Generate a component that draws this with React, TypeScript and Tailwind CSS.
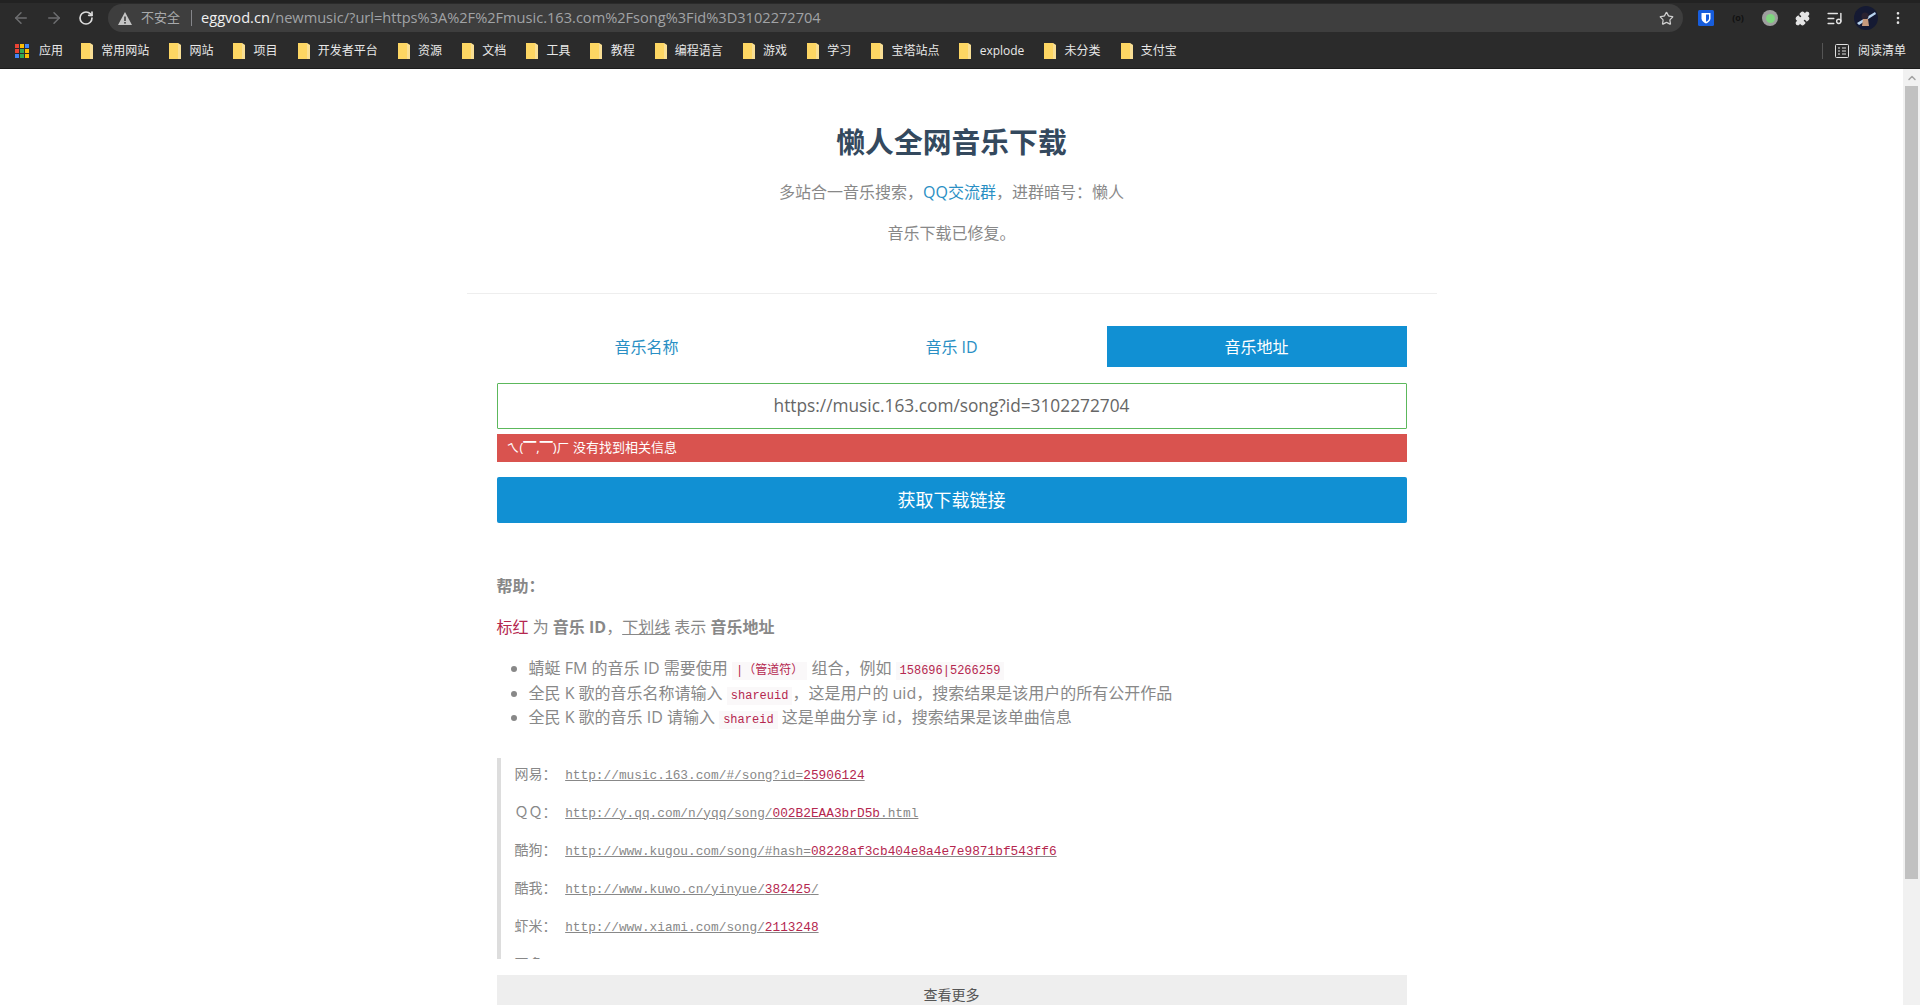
import { ArrowLeft, ArrowRight, RotateCw, Star, Puzzle, ChevronUp, EllipsisVertical, ListMusic } from 'lucide-react';

const bookmarks = ['常用网站', '网站', '项目', '开发者平台', '资源', '文档', '工具', '教程', '编程语言', '游戏', '学习', '宝塔站点', 'explode', '未分类', '支付宝'];

const examples = [
  { label: '网易', plain: 'http://music.163.com/#/song?id=', red: '25906124', tail: '' },
  { label: 'ＱＱ', plain: 'http://y.qq.com/n/yqq/song/', red: '002B2EAA3brD5b', tail: '.html' },
  { label: '酷狗', plain: 'http://www.kugou.com/song/#hash=', red: '08228af3cb404e8a4e7e9871bf543ff6', tail: '' },
  { label: '酷我', plain: 'http://www.kuwo.cn/yinyue/', red: '382425', tail: '/' },
  { label: '虾米', plain: 'http://www.xiami.com/song/', red: '2113248', tail: '' },
  { label: '更多', plain: 'http://www.xiami.com/', red: '', tail: '' },
];

function Folder() {
  return (
    <svg width="12" height="16" viewBox="0 0 12 16" className="shrink-0">
      <path d="M0 0h9l3 2v14H0z" fill="#fdd663" />
      <path d="M9 0l3 2v14H9z" fill="#f2f2f2" opacity="0.35" />
    </svg>
  );
}

function AppsIcon() {
  const colors = ['#ea4335', '#fbbc04', '#4285f4', '#ea4335', '#34a853', '#fbbc04', '#4285f4', '#34a853', '#fbbc04'];
  return (
    <svg width="14" height="14" viewBox="0 0 14 14" className="shrink-0">
      {colors.map((c, i) => (
        <rect key={i} x={(i % 3) * 5} y={Math.floor(i / 3) * 5} width="4" height="4" fill={c} />
      ))}
    </svg>
  );
}

function Code({ children }: { children: React.ReactNode }) {
  return (
    <code className="bg-[#faf8f9] text-[#b5274f] text-[12px] leading-none px-[4px] py-[2px] font-['Liberation_Mono','Noto_Sans_CJK_SC',monospace]">
      {children}
    </code>
  );
}

function Toolbar() {
  return (
    <div className="h-[36px] bg-[#2b2b2b] flex items-center pb-[3px] pl-[5px] border-t-[3px] border-[#222222]">
      <div className="w-[32px] flex justify-center"><ArrowLeft size={18} className="text-[#6d6e70]" /></div>
      <div className="w-[33px] flex justify-center"><ArrowRight size={18} className="text-[#6d6e70]" /></div>
      <div className="w-[32px] flex justify-center"><RotateCw size={16} strokeWidth={2.5} className="text-[#dcdcdc]" /></div>
      <div className="ml-[6px] w-[1575px] h-[28px] rounded-full bg-[#3e3e3e] flex items-center pl-[10px] pr-[9px] text-[14.600px]">
        <svg width="14" height="13" viewBox="0 0 14 13" className="shrink-0">
          <path d="M7 0l7 13H0z" fill="#c4c4c4" />
          <rect x="6.2" y="4.5" width="1.6" height="4.5" fill="#3e3e3e" />
          <rect x="6.2" y="10" width="1.6" height="1.6" fill="#3e3e3e" />
        </svg>
        <span className="ml-[9px] text-[13px] text-[#a8a9ab]">不安全</span>
        <span className="ml-[11px] mr-[9px] w-[1px] h-[16px] bg-[#85868a]" />
        <span className="text-[#f1f1f1]">eggvod.cn</span>
        <span className="text-[#a1a3a6]">/newmusic/?url=https%3A%2F%2Fmusic.163.com%2Fsong%3Fid%3D3102272704</span>
        <Star size={15} className="ml-auto text-[#d0d0d0]" />
      </div>
      <div className="ml-[7px] flex items-center">
        <div className="w-[32px] flex justify-center">
          <svg width="16" height="16" viewBox="0 0 16 16">
            <rect width="16" height="16" rx="1.5" fill="#175ddc" />
            <path d="M3.5 3h9v5.5c0 2.5-2.5 4-4.5 5-2-1-4.500-2.500-4.500-5z" fill="#fff" />
            <path d="M8 4.500h3v4c0 1.500-1.500 2.500-3 3.300z" fill="#175ddc" />
          </svg>
        </div>
        <div className="w-[32px] text-center text-[9px] font-bold text-[#111111]">(o)</div>
        <div className="w-[32px] flex justify-center">
          <div className="w-[16px] h-[16px] rounded-full bg-[#9e9e9e] flex items-center justify-center">
            <div className="w-[9px] h-[9px] rounded-full bg-[#7fd67f]" />
          </div>
        </div>
        <div className="w-[32px] flex justify-center"><Puzzle size={15} fill="#e4e4e4" className="text-[#e4e4e4]" /></div>
        <div className="w-[32px] flex justify-center"><ListMusic size={17} className="text-[#e4e4e4]" /></div>
        <div className="w-[32px] flex justify-center">
          <svg width="24" height="24" viewBox="0 0 24 24">
            <circle cx="12" cy="12" r="12" fill="#151a33" />
            <path d="M3 17L21 6l1 2L5 19z" fill="#b8d4ef" />
            <circle cx="11" cy="10" r="3.500" fill="#2a2230" />
            <path d="M9 13h5l1 7H8z" fill="#c69a7d" />
          </svg>
        </div>
        <div className="w-[32px] flex justify-center"><EllipsisVertical size={16} className="text-[#e4e4e4]" /></div>
      </div>
    </div>
  );
}

function BookmarkBar() {
  return (
    <div className="h-[33px] bg-[#2b2b2b] flex items-center pb-[2px] pl-[15px] pr-[14px] text-[12px] text-[#e8e8e8] border-b border-[#1c1c1c]">
      <div className="flex items-center gap-[10px] mr-[18px]">
        <AppsIcon />
        <span>应用</span>
      </div>
      <div className="flex items-center gap-[20px]">
        {bookmarks.map((name) => (
          <div key={name} className="flex items-center gap-[8.200px]">
            <Folder />
            <span>{name}</span>
          </div>
        ))}
      </div>
      <div className="ml-auto flex items-center">
        <span className="w-[1px] h-[16px] bg-[#555555] mr-[12px]" />
        <svg width="14" height="14" viewBox="0 0 14 14" fill="none" stroke="#e0e0e0" className="mr-[9px]">
          <rect x="0.500" y="0.500" width="13" height="13" rx="1" />
          <path d="M3 4h2M7 4h4M3 7h2M7 7h4M3 10h2M7 10h4" />
        </svg>
        <span>阅读清单</span>
      </div>
    </div>
  );
}

function Scrollbar() {
  return (
    <div className="w-[17px] shrink-0 bg-[#f1f1f1] flex flex-col items-center">
      <div className="h-[17px] flex items-center justify-center">
        <ChevronUp size={12} strokeWidth={3} className="text-[#a3a3a3]" />
      </div>
      <div className="w-[13px] h-[793px] bg-[#c1c1c1]" />
    </div>
  );
}

export default function App() {
  return (
    <div className="h-screen overflow-hidden flex flex-col bg-white font-['Open_Sans','Noto_Sans_CJK_SC',sans-serif]">
      <Toolbar />
      <BookmarkBar />
      <div className="flex-1 flex min-h-0">
        <div className="flex-1 overflow-hidden relative">
          <div className="w-[970px] mx-auto">
            <header className="h-[225px] border-b border-[#eeeeee] flex flex-col items-center text-[16px] text-[#888888]">
              <h1 className="mt-[53px] text-[28.800px] leading-[40px] font-bold text-[#34495e]">懒人全网音乐下载</h1>
              <p className="mt-[17px] leading-[26px]">
                多站合一音乐搜索，<span className="text-[#2a8fc4]">QQ交流群</span>，进群暗号：懒人
              </p>
              <p className="mt-[15px] leading-[26px]">音乐下载已修复。</p>
            </header>

            <div className="w-[910px] mx-auto mt-[32px]">
              <div className="grid grid-cols-3 gap-[5px] text-[16px] text-center leading-[40px] text-[#2a8fc4]">
                <div className="pt-[1px]">音乐名称</div>
                <div className="pt-[1px]">音乐 ID</div>
                <div className="pt-[1px] bg-[#1190d3] text-white">音乐地址</div>
              </div>
              <div className="mt-[16px] h-[46px] border border-[#5cb85c] rounded-[1px] flex items-center justify-center text-[17.300px] text-[#666666]">
                https://music.163.com/song?id=3102272704
              </div>
              <div className="mt-[5px] h-[28px] bg-[#d9534f] flex items-center pb-[1px] pl-[10px] text-[13px] text-white">
                ㄟ(▔,▔)ㄏ 没有找到相关信息
              </div>
              <button className="mt-[15px] w-full h-[46px] rounded-[2px] bg-[#1190d3] text-white text-[18px] block">
                获取下载链接
              </button>

              <div className="mt-[50px] text-[16px] text-[#888888] leading-[26px]">
                <p className="font-bold">帮助：</p>
                <p className="mt-[15px]">
                  <span className="text-[#b5274f]">标红</span> 为 <b>音乐 ID</b>，<span className="underline">下划线</span> 表示 <b>音乐地址</b>
                </p>
                <ul className="mt-[16px] pl-[32px] list-disc leading-[24.500px]">
                  <li>蜻蜓 FM 的音乐 ID 需要使用 <Code>|（管道符）</Code> 组合，例如 <Code>158696|5266259</Code></li>
                  <li>全民 K 歌的音乐名称请输入 <Code>shareuid</Code>，这是用户的 uid，搜索结果是该用户的所有公开作品</li>
                  <li>全民 K 歌的音乐 ID 请输入 <Code>shareid</Code> 这是单曲分享 id，搜索结果是该单曲信息</li>
                </ul>
                <div className="mt-[28px] h-[201px] overflow-hidden border-l-[4px] border-[#dddddd] pl-[14px] text-[14px]">
                  {examples.map((row) => (
                    <p key={row.label} className="h-[22px] leading-[22px] mb-[16px] first:mt-[5px]">
                      {row.label}： <span className="underline ml-[5px] text-[12.800px] leading-none font-['Liberation_Mono',monospace]">
                        {row.plain}<span className="text-[#b5274f]">{row.red}</span>{row.tail}
                      </span>
                    </p>
                  ))}
                </div>
                <div className="mt-[16px] h-[40px] bg-[#eeeeee] text-center text-[14px] text-[#555555] leading-[40px]">查看更多</div>
              </div>
            </div>
          </div>
        </div>
        <Scrollbar />
      </div>
    </div>
  );
}
